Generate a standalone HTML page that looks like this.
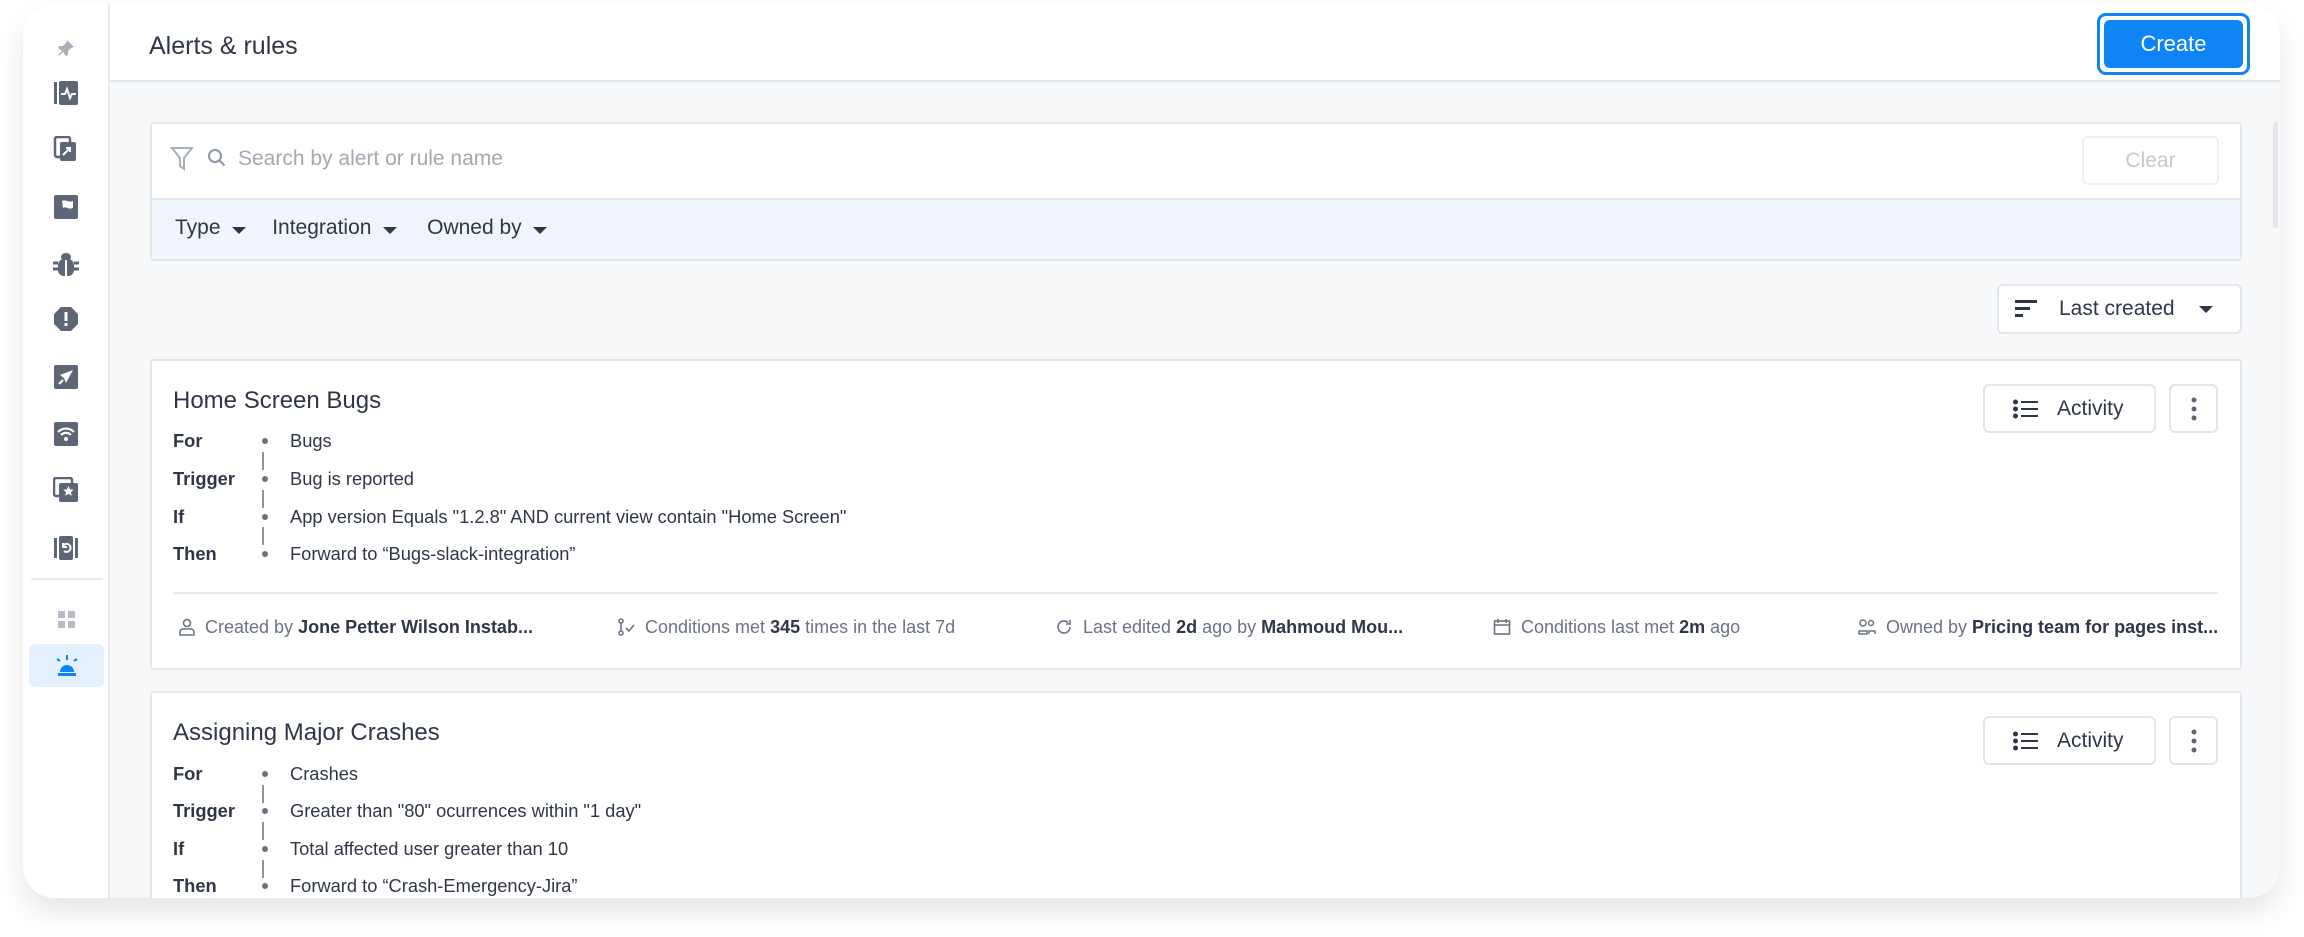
<!DOCTYPE html>
<html><head><meta charset="utf-8"><style>
*{box-sizing:border-box;margin:0;padding:0}
body{width:2304px;height:937px;background:#fff;font-family:"Liberation Sans",sans-serif;color:#2f3747;overflow:hidden;position:relative}
.frame{position:absolute;left:23px;top:4px;width:2257px;height:894px;border-radius:32px;background:#f7f8fa;overflow:hidden;box-shadow:0 14px 28px rgba(0,0,0,.10)}
.side{position:absolute;left:0;top:0;width:87px;height:100%;background:#fff;border-right:2px solid #e6e9ee}
.ic{position:absolute;left:30px}
.hdr{position:absolute;left:87px;top:0;right:0;height:78px;background:#fff;border-bottom:2px solid #e3e6eb}
.title{position:absolute;left:39px;top:28px;font-size:25px;color:#2f3747}
.create{position:absolute;top:9px;width:153px;height:62px;border:3px solid #0f85f5;border-radius:9px;padding:4px}
.create div{background:#0f85f5;color:#fff;border-radius:6px;height:100%;font-size:22px;display:flex;align-items:center;justify-content:center}
.box{position:absolute;background:#fff;border:2px solid #e3e6eb;border-radius:4px}
.btn{position:absolute;background:#fff;border:2px solid #e1e4e9;border-radius:6px;display:flex;align-items:center;font-size:21px;color:#2f3747}
.card h2{position:absolute;left:21px;font-size:24px;font-weight:normal;color:#2f3747}
.row{position:absolute;left:21px;font-size:18.3px;color:#2f3747;display:flex;align-items:center}
.row .l{width:89px;font-weight:bold;color:#2f3747}
.row .d{width:6px;height:6px;border-radius:3px;background:#6a7282;margin-right:22px}
.vl{position:absolute;left:110px;width:2px;height:18px;background:#8d95a3}
.foot{position:absolute;top:254px;font-size:18px;color:#6b7383;white-space:nowrap}
.foot b{color:#2f3747}
.foot svg{vertical-align:-3px;margin-right:10px}
.caret{display:inline-block;width:0;height:0;border-left:7px solid transparent;border-right:7px solid transparent;border-top:7px solid #2f3747}
</style></head><body>
<div class="frame">
 <div class="side">
  <svg style="position:absolute;left:33px;top:34px" width="20" height="20" viewBox="0 0 20 20"><path d="M11 2l7 7-3 1-3 3 0 4-2 1-3-4-4 4-1-1 4-4-4-3 1-2 4 0 3-3z" fill="#a9afb9"/></svg>
  <svg class="ic" style="top:76px" width="26" height="26" viewBox="0 0 26 26"><rect x="1" y="2" width="3" height="22" fill="#5d6676"/><rect x="6" y="1" width="19" height="24" rx="2" fill="#5d6676"/><path d="M8 14h4l2-5 3 9 2-4h4" fill="none" stroke="#fff" stroke-width="2"/></svg>
  <svg class="ic" style="top:132px" width="26" height="26" viewBox="0 0 26 26"><rect x="2" y="1" width="15" height="20" rx="2" fill="none" stroke="#5d6676" stroke-width="2.5"/><rect x="7" y="6" width="16" height="19" rx="2" fill="#5d6676"/><path d="M10 19l7-7M13 12h4v4" stroke="#fff" stroke-width="2" fill="none"/></svg>
  <svg class="ic" style="top:190px" width="26" height="26" viewBox="0 0 26 26"><rect x="1" y="1" width="24" height="24" rx="2" fill="#5d6676"/><path d="M7 6l3 15M9 7c4-2 6 2 11 0v7c-5 2-7-2-10 0" fill="#fff"/></svg>
  <svg class="ic" style="top:247px" width="26" height="26" viewBox="0 0 26 26"><ellipse cx="13" cy="6" rx="5" ry="4" fill="#5d6676"/><rect x="5" y="8" width="16" height="17" rx="6" fill="#5d6676"/><path d="M13 9v16" stroke="#fff" stroke-width="2"/><path d="M0 12h5M21 12h5M0 18h5M21 18h5" stroke="#5d6676" stroke-width="3"/></svg>
  <svg class="ic" style="top:302px" width="26" height="26" viewBox="0 0 26 26"><path d="M8 1h10l7 7v10l-7 7H8l-7-7V8z" fill="#5d6676"/><rect x="11.5" y="6" width="3" height="9" fill="#fff"/><rect x="11.5" y="17" width="3" height="3" fill="#fff"/></svg>
  <svg class="ic" style="top:360px" width="26" height="26" viewBox="0 0 26 26"><rect x="1" y="1" width="24" height="24" rx="2" fill="#5d6676"/><path d="M20 6L7 11l4 3 2 5z" fill="#fff"/><path d="M6 20l4-4" stroke="#fff" stroke-width="2"/></svg>
  <svg class="ic" style="top:417px" width="26" height="26" viewBox="0 0 26 26"><rect x="1" y="1" width="24" height="24" rx="2" fill="#5d6676"/><path d="M5 11a11 11 0 0 1 16 0M8 14a7 7 0 0 1 10 0" fill="none" stroke="#fff" stroke-width="2.2"/><circle cx="13" cy="18" r="2" fill="#fff"/></svg>
  <svg class="ic" style="top:473px" width="26" height="26" viewBox="0 0 26 26"><rect x="1" y="1" width="18" height="18" rx="2" fill="none" stroke="#5d6676" stroke-width="2.5"/><rect x="6" y="6" width="19" height="19" rx="2" fill="#5d6676"/><path d="M15.5 9l1.6 3.4 3.6.4-2.7 2.4.8 3.6-3.3-1.9-3.3 1.9.8-3.6-2.7-2.4 3.6-.4z" fill="#fff"/></svg>
  <svg class="ic" style="top:531px" width="26" height="26" viewBox="0 0 26 26"><rect x="1" y="3" width="3" height="20" fill="#5d6676"/><rect x="22" y="3" width="3" height="20" fill="#5d6676"/><rect x="6" y="1" width="14" height="24" rx="2" fill="#5d6676"/><path d="M10 11a4 4 0 1 1 1 5M10 8v4h4" fill="none" stroke="#fff" stroke-width="2"/></svg>
  <div style="position:absolute;left:8px;top:574px;width:72px;height:2px;background:#e6e9ee"></div>
  <div style="position:absolute;left:35px;top:607px;width:7px;height:7px;background:#b7bcc5"></div>
  <div style="position:absolute;left:45px;top:607px;width:7px;height:7px;background:#b7bcc5"></div>
  <div style="position:absolute;left:35px;top:617px;width:7px;height:7px;background:#b7bcc5"></div>
  <div style="position:absolute;left:45px;top:617px;width:7px;height:7px;background:#b7bcc5"></div>
  <div style="position:absolute;left:6px;top:640px;width:75px;height:43px;background:#e4f0fd;border-radius:6px"></div>
  <svg style="position:absolute;left:31px;top:648px" width="26" height="26" viewBox="0 0 26 26"><path d="M6 20a7 7 0 0 1 14 0z" fill="#0f85f5"/><rect x="4" y="21" width="18" height="3" fill="#0f85f5"/><rect x="12" y="3" width="2" height="5" fill="#0f85f5"/><path d="M3 7l3 2M23 7l-3 2" stroke="#0f85f5" stroke-width="2.2"/></svg>
 </div>
 <div class="hdr">
  <div class="title">Alerts &amp; rules</div>
  <div class="create" style="left:1987px"><div>Create</div></div>
 </div>
 <div style="position:absolute;left:2250px;top:118px;width:5px;height:106px;background:#e4e7ec;border-radius:3px"></div>
 <div class="box" style="left:127px;top:118px;width:2092px;height:139px;overflow:hidden">
  <svg style="position:absolute;left:18px;top:22px" width="24" height="26" viewBox="0 0 24 26"><path d="M2 2h20l-8 10v11l-4-3v-8z" fill="none" stroke="#a9afb9" stroke-width="2"/></svg>
  <svg style="position:absolute;left:55px;top:24px" width="20" height="20" viewBox="0 0 20 20"><circle cx="8" cy="8" r="6" fill="none" stroke="#8d95a3" stroke-width="2"/><path d="M12.5 12.5l5 5" stroke="#8d95a3" stroke-width="2"/></svg>
  <div style="position:absolute;left:86px;top:23px;font-size:21px;color:#a2a8b2">Search by alert or rule name</div>
  <div class="btn" style="left:1930px;top:12px;width:137px;height:49px;justify-content:center;color:#c4c8cf;border-color:#eef0f3">Clear</div>
  <div style="position:absolute;left:0;top:74px;width:100%;height:65px;background:#f0f5fc;border-top:2px solid #e3e6eb">
   <div style="position:absolute;left:23px;top:16px;font-size:21px;white-space:nowrap">Type&nbsp;&nbsp;<span class="caret"></span><span style="margin-left:26px">Integration</span>&nbsp;&nbsp;<span class="caret"></span><span style="margin-left:30px">Owned by</span>&nbsp;&nbsp;<span class="caret"></span></div>
  </div>
 </div>
 <div class="btn" style="left:1974px;top:280px;width:245px;height:50px">
  <svg style="margin-left:16px" width="24" height="22" viewBox="0 0 24 22"><rect x="0" y="2" width="22" height="3" fill="#2f3747"/><rect x="0" y="9" width="15" height="3" fill="#2f3747"/><rect x="0" y="16" width="8" height="3" fill="#2f3747"/></svg>
  <span style="margin-left:20px">Last created</span><span class="caret" style="margin-left:24px"></span>
 </div>
 <div class="box card" style="left:127px;top:355px;width:2092px;height:311px">
  <h2 style="top:26px">Home Screen Bugs</h2>
  <div class="row" style="top:69px"><span class="l">For</span><span class="d"></span>Bugs</div>
  <div class="row" style="top:107px"><span class="l">Trigger</span><span class="d"></span>Bug is reported</div>
  <div class="row" style="top:145px"><span class="l">If</span><span class="d"></span>App version Equals "1.2.8" AND current view contain "Home Screen"</div>
  <div class="row" style="top:182px"><span class="l">Then</span><span class="d"></span>Forward to “Bugs-slack-integration”</div>
  <div class="vl" style="top:91px"></div><div class="vl" style="top:129px"></div><div class="vl" style="top:166px"></div>
  <div class="btn" style="left:1831px;top:23px;width:173px;height:49px"><svg style="margin-left:28px" width="26" height="20" viewBox="0 0 26 20"><circle cx="2.5" cy="3" r="2.5" fill="#2f3747"/><circle cx="2.5" cy="10" r="2.5" fill="#2f3747"/><circle cx="2.5" cy="17" r="2.5" fill="#2f3747"/><rect x="8" y="2" width="17" height="2" fill="#2f3747"/><rect x="8" y="9" width="17" height="2" fill="#2f3747"/><rect x="8" y="16" width="17" height="2" fill="#2f3747"/></svg><span style="margin-left:18px">Activity</span></div>
  <div class="btn" style="left:2017px;top:23px;width:49px;height:49px;justify-content:center"><svg width="6" height="24"><circle cx="3" cy="3" r="2.5" fill="#5d6676"/><circle cx="3" cy="12" r="2.5" fill="#5d6676"/><circle cx="3" cy="21" r="2.5" fill="#5d6676"/></svg></div>
  <div style="position:absolute;left:21px;top:231px;width:2045px;height:2px;background:#e6e9ee"></div>
  <div class="foot" style="left:27px;top:256px"><svg width="16" height="18" viewBox="0 0 16 18"><circle cx="8" cy="5" r="3.5" fill="none" stroke="#6b7383" stroke-width="1.6"/><path d="M1 17v-3a3 3 0 0 1 3-3h8a3 3 0 0 1 3 3v3z" fill="none" stroke="#6b7383" stroke-width="1.6"/></svg>Created by <b>Jone Petter Wilson Instab...</b></div>
  <div class="foot" style="left:465px;top:256px"><svg width="18" height="18" viewBox="0 0 18 18"><circle cx="4" cy="3" r="2" fill="none" stroke="#6b7383" stroke-width="1.6"/><circle cx="4" cy="15" r="2" fill="none" stroke="#6b7383" stroke-width="1.6"/><path d="M4 5v8M9 10l3 3 5-6" fill="none" stroke="#6b7383" stroke-width="1.6"/></svg>Conditions met <b>345</b> times in the last 7d</div>
  <div class="foot" style="left:903px;top:256px"><svg width="18" height="18" viewBox="0 0 18 18"><path d="M15 9a6 6 0 1 1-2-4.5M15 2v4h-4" fill="none" stroke="#6b7383" stroke-width="1.6"/></svg>Last edited <b>2d</b> ago by <b>Mahmoud Mou...</b></div>
  <div class="foot" style="left:1341px;top:256px"><svg width="18" height="18" viewBox="0 0 18 18"><rect x="1.5" y="3" width="15" height="13" fill="none" stroke="#6b7383" stroke-width="1.6"/><path d="M1.5 7h15M5 1v4M13 1v4" stroke="#6b7383" stroke-width="1.6"/></svg>Conditions last met <b>2m</b> ago</div>
  <div class="foot" style="left:1706px;top:256px"><svg width="18" height="18" viewBox="0 0 18 18"><circle cx="5" cy="5" r="3" fill="none" stroke="#6b7383" stroke-width="1.5"/><circle cx="13" cy="5" r="2.5" fill="none" stroke="#6b7383" stroke-width="1.5"/><path d="M1 16v-3h8v3zM11 16v-3h6v3" fill="none" stroke="#6b7383" stroke-width="1.5"/></svg>Owned by <b>Pricing team for pages inst...</b></div>
 </div>
 <div class="box card" style="left:127px;top:687px;width:2092px;height:260px">
  <h2 style="top:26px">Assigning Major Crashes</h2>
  <div class="row" style="top:70px"><span class="l">For</span><span class="d"></span>Crashes</div>
  <div class="row" style="top:107px"><span class="l">Trigger</span><span class="d"></span>Greater than "80" ocurrences within "1 day"</div>
  <div class="row" style="top:145px"><span class="l">If</span><span class="d"></span>Total affected user greater than 10</div>
  <div class="row" style="top:182px"><span class="l">Then</span><span class="d"></span>Forward to “Crash-Emergency-Jira”</div>
  <div class="vl" style="top:92px"></div><div class="vl" style="top:129px"></div><div class="vl" style="top:167px"></div>
  <div class="btn" style="left:1831px;top:23px;width:173px;height:49px"><svg style="margin-left:28px" width="26" height="20" viewBox="0 0 26 20"><circle cx="2.5" cy="3" r="2.5" fill="#2f3747"/><circle cx="2.5" cy="10" r="2.5" fill="#2f3747"/><circle cx="2.5" cy="17" r="2.5" fill="#2f3747"/><rect x="8" y="2" width="17" height="2" fill="#2f3747"/><rect x="8" y="9" width="17" height="2" fill="#2f3747"/><rect x="8" y="16" width="17" height="2" fill="#2f3747"/></svg><span style="margin-left:18px">Activity</span></div>
  <div class="btn" style="left:2017px;top:23px;width:49px;height:49px;justify-content:center"><svg width="6" height="24"><circle cx="3" cy="3" r="2.5" fill="#5d6676"/><circle cx="3" cy="12" r="2.5" fill="#5d6676"/><circle cx="3" cy="21" r="2.5" fill="#5d6676"/></svg></div>
 </div>
</div>
</body></html>
